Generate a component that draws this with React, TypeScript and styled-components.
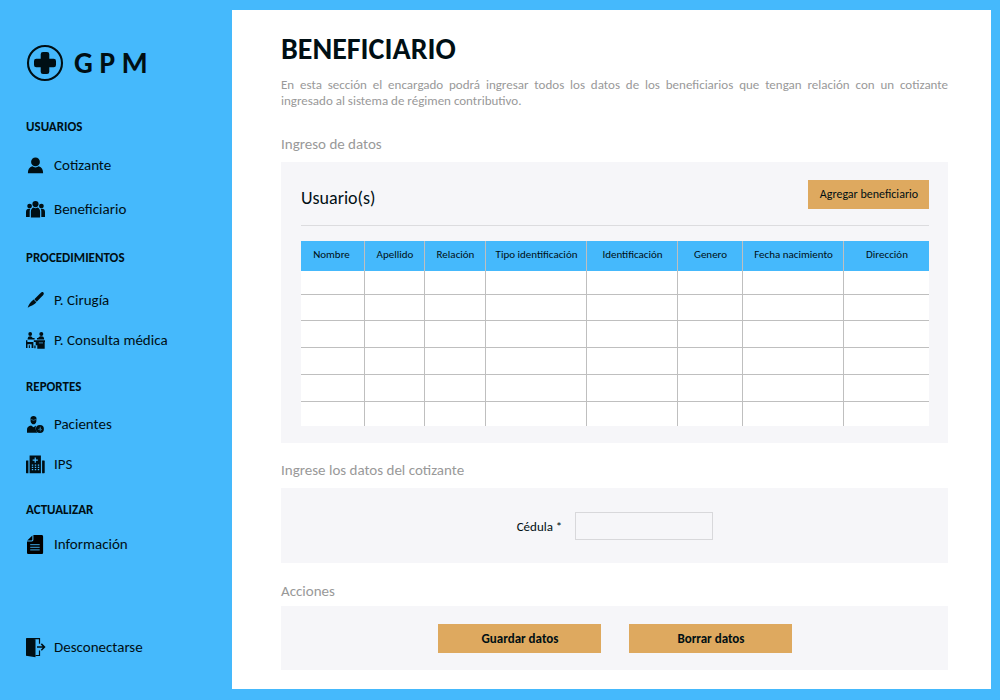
import React from 'react';
import styled, { createGlobalStyle } from 'styled-components';

const BLUE = '#45b9fc';
const INK = '#000f14';
const MUTED = '#999999';
const PANEL = '#f6f6f9';
const ORANGE = '#dea95f';
const GRID = '#bfbfbf';

const GlobalStyle = createGlobalStyle`
  * { box-sizing: border-box; }
  body { margin: 0; }
  body, button, input { font-family: Calibri, Carlito, Lato, sans-serif; color: ${INK}; }
`;

const Page = styled.div`
  display: flex;
  width: 1000px;
  height: 700px;
  padding: 10px 9px 11px 0;
  background: ${BLUE};
  overflow: hidden;
`;

const Sidebar = styled.nav`
  width: 232px;
  flex: none;
  padding: 35px 0 0 26px;
`;

const Brand = styled.div`
  display: flex;
  align-items: center;
  height: 36px;
  margin-bottom: 39px;
`;

const BrandMark = styled.svg`
  width: 38px;
  height: 38px;
  flex: none;
`;

const BrandName = styled.span`
  font-size: 29.5px;
  font-weight: 700;
  line-height: 36px;
  padding: 0 0 1px 10px;
`;

const NavGroup = styled.section<{ $before?: number; $gap: number }>`
  display: flex;
  flex-direction: column;
  gap: ${p => p.$gap}px;
  margin-top: ${p => p.$before ?? 0}px;
`;

const NavHeading = styled.h2<{ $after: number; $gap: number }>`
  margin: 0 0 ${p => p.$after - p.$gap}px;
  padding-bottom: 2px;
  font-size: 13px;
  line-height: 14px;
  font-weight: 700;
`;

const NavItem = styled.a`
  display: flex;
  align-items: flex-start;
  gap: 8px;
  height: 20px;
  font-size: 15px;
  line-height: 18px;
  white-space: nowrap;
`;

const Glyph = styled.svg`
  width: 20px;
  height: 20px;
  flex: none;
  fill: ${INK};
  overflow: visible;
`;

const Main = styled.main`
  width: 759px;
  padding: 24px 43px 0 49px;
  background: #fff;
`;

const Title = styled.h1`
  margin: 0;
  padding-bottom: 5px;
  font-size: 30px;
  line-height: 30px;
  font-weight: 700;
`;

const Intro = styled.p`
  margin: 8px 0 0;
  font-size: 13px;
  line-height: 16px;
  color: ${MUTED};
  text-align: justify;
`;

const Label = styled.h3<{ $before: number; $after: number }>`
  margin: ${p => p.$before}px 0 ${p => p.$after}px;
  font-size: 15px;
  line-height: 20px;
  font-weight: 400;
  color: ${MUTED};
`;

const Panel = styled.section<{ $height: number }>`
  height: ${p => p.$height}px;
  background: ${PANEL};
`;

const UsersPanel = styled(Panel)`
  padding: 18px 19px 0 20px;
`;

const CenteredPanel = styled(Panel)<{ $gap: number }>`
  display: flex;
  align-items: center;
  justify-content: center;
  gap: ${p => p.$gap}px;
`;

const PanelHeader = styled.header`
  display: flex;
  justify-content: space-between;
  height: 46px;
  margin-bottom: 15px;
  border-bottom: 1px solid #dcdcdf;
`;

const PanelTitle = styled.span`
  padding-top: 8px;
  font-size: 18px;
  line-height: 20px;
`;

const Button = styled.button<{ $width: number; $strong?: boolean }>`
  width: ${p => p.$width}px;
  height: 29px;
  padding: 0 0 0 ${p => (p.$strong ? 2 : 1)}px;
  border: 0;
  background: ${ORANGE};
  font-size: ${p => (p.$strong ? 13 : 12)}px;
  font-weight: ${p => (p.$strong ? 700 : 400)};
  line-height: 29px;
`;

const Table = styled.table`
  width: 628px;
  table-layout: fixed;
  border-collapse: separate;
  border-spacing: 0;
  background: #fff;
`;

const HeadCell = styled.th`
  height: 30px;
  padding: 0 0 2px 1px;
  border-right: 1px solid ${GRID};
  background: ${BLUE};
  font-size: 11px;
  line-height: 14px;
  font-weight: 400;
  white-space: nowrap;
  &:first-child { padding: 0 2px 2px 0; }
  &:last-child { border-right: 0; }
`;

const Row = styled.tr<{ $height: number }>`
  height: ${p => p.$height}px;
  &:last-child td { border-bottom: 0; }
`;

const Cell = styled.td`
  padding: 0;
  border-right: 1px solid ${GRID};
  border-bottom: 1px solid ${GRID};
  &:last-child { border-right: 0; }
`;

const FieldLabel = styled.label`
  padding: 2px 0 0 1px;
  font-size: 13px;
  line-height: 16px;
`;

const Field = styled.input`
  width: 138px;
  height: 28px;
  padding: 0 8px;
  border: 1px solid #d8d8db;
  background: transparent;
  outline: 0;
`;

const PersonIcon = () => (
  <Glyph viewBox="0 0 20 20">
    <circle cx="9.5" cy="5.9" r="4.4" />
    <path d="M1.9 17.2c0-3.6 1.2-6 4.4-6.9 1.8 1.5 4.6 1.5 6.4 0 3.2.9 4.4 3.3 4.4 6.9z" />
  </Glyph>
);

const PeopleIcon = () => (
  <Glyph viewBox="0 0 20 20">
    <circle cx="9.5" cy="4.1" r="3.1" />
    <circle cx="3.6" cy="6.1" r="2.4" />
    <circle cx="15.4" cy="6.1" r="2.4" />
    <path d="M4.9 17.6v-6.2c0-2 1.1-3.2 2.6-3.8 1.2.7 2.8.7 4 0 1.5.6 2.6 1.8 2.6 3.8v6.2z" />
    <path d="M0 17v-5c0-1.800.8-3 2.200-3.300.6.300 1.300.400 2 .300-.4.800-.5 1.600-.5 2.500V17z" />
    <path d="M19 17v-5c0-1.800-.8-3-2.200-3.300-.6.300-1.300.400-2 .300.4.800.5 1.600.5 2.500V17z" />
  </Glyph>
);

const ScalpelIcon = () => (
  <Glyph viewBox="0 0 20 20">
    <path d="M8.300 8.200 14.600 2c1-.9 2-1.200 2.800-.5.700.8.500 1.800-.4 2.800l-6.300 6.500z" />
    <path d="M7.700 8.600 10.300 11.200c-1 1.500-2.400 2.400-4.200 3.200l-1.900.8-2.500 1.500c.8-3 3-5.900 6-8.100z" />
  </Glyph>
);

const ConsultIcon = () => (
  <Glyph viewBox="0 0 20 20">
    <circle cx="4.200" cy="3" r="1.900" />
    <circle cx="15.300" cy="3" r="2" />
    <path d="M1.600 8.600c0-2.200.8-3.400 2.600-3.400 1.300 0 1.900.7 2.400 1.900h2v1.500z" />
    <path d="M11 7.100h1.200c.6-1.300 1.500-1.900 3.100-1.900 2 0 2.900 1.200 2.900 3.400H11z" />
    <path d="M0 9.200h1.400v1.700h6V17H5.600v-3.700H1.500V17H0z" />
    <path d="M2.800 14.200h1.100V17H2.800z" />
    <path d="M7.800 9.200H19v1.700h-.3v6.900h-7.400v-3.600H9.700v-3.300H7.800z" />
    <path d="M8.300 14.400h1.300v2.800H8.300z" />
    <path d="M12.800 11.900h4.200" stroke={BLUE} strokeWidth=".7" />
  </Glyph>
);

const PatientIcon = () => (
  <Glyph viewBox="0 0 20 20">
    <path d="M4.500 3.500C4.500 1.700 5.700.900 7.500.900s3 .8 3 2.600l-.2 2.900c-.3 1.700-1.400 2.900-2.800 2.900S5 8.100 4.700 6.400z" />
    <path d="M5.100 4.500 7.500 5.300l2.400-.8" fill="none" stroke={BLUE} strokeWidth=".5" />
    <path d="M1 17.700v-2.900c0-2.500 1.300-3.600 4.100-4.200L7.500 12.300l2.600-1.700c-1 2.500-.4 5.200 1.300 7.100z" />
    <circle cx="13.900" cy="14" r="4" />
    <path d="M14.300 11.700v4.600M12.300 14.500l2-.7 1.600 1" fill="none" stroke={BLUE} strokeWidth=".7" opacity=".75" />
  </Glyph>
);

const HospitalIcon = () => (
  <Glyph viewBox="0 0 20 20">
    <path d="M3.600.400h11.300v17.900H3.600zM.400 5.600h2v12.700h-2c-.3 0-.4-.2-.4-.5V6.100c0-.3.100-.5.400-.5zM16.100 5.600h2c.4 0 .6.200.6.500v11.700c0 .300-.2.500-.6.500h-2z" />
    <path d="M9.250 2.500v5.200M6.650 5.100h5.200" stroke={BLUE} strokeWidth="1.200" />
    <path d="M5.800 10.100h7.400M5.800 12.400h7.400M5.800 14.700h7.400" stroke={BLUE} strokeWidth="1.200" strokeDasharray="1.400 1.600" />
  </Glyph>
);

const DocumentIcon = () => (
  <Glyph viewBox="0 0 20 20" >
    <path fill="#000" d="M7.400 0h8.100c1.100 0 1.600.6 1.600 1.600v15.800c0 1-.5 1.600-1.600 1.600H2.600c-1 0-1.600-.6-1.600-1.600V6.400h4.600c1.300 0 1.800-.5 1.800-1.800z" />
    <path fill="#000" d="M6.400.4v4.200c0 .6-.3.900-.9.900H1.200z" />
    <path d="M4.200 9.700h9.500M4.200 12.300h9.500M4.200 14.900h9.500" stroke={BLUE} strokeWidth=".9" />
  </Glyph>
);

const ExitIcon = () => (
  <Glyph viewBox="0 0 20 20">
    <path d="M0 .200 9.500 1.300v17.900L0 17.800z" />
    <path d="M.5.700h13v5M13.500 12.600v4.900H9.500" fill="none" stroke={INK} strokeWidth="1.200" />
    <path d="M11 9.100h7M15.300 5.900l3.200 3.200-3.200 3.200" fill="none" stroke={INK} strokeWidth="1.500" />
  </Glyph>
);

const columns: [string, number][] = [
  ['Nombre', 64],
  ['Apellido', 60],
  ['Relación', 61],
  ['Tipo identificación', 101],
  ['Identificación', 91],
  ['Genero', 65],
  ['Fecha nacimiento', 101],
  ['Dirección', 85],
];

const rowHeights = [24, 26, 27, 27, 27, 24];

export default function App() {
  return (
    <Page>
      <GlobalStyle />
      <Sidebar>
        <Brand>
          <BrandMark viewBox="0 0 38 38">
            <circle cx="19" cy="19" r="17" fill="none" stroke={INK} strokeWidth="2.100" />
            <path
              fill={INK}
              d="M17 8h4a2.300 2.300 0 0 1 2.300 2.300v4.400h4.400A2.300 2.300 0 0 1 30 17v4a2.300 2.300 0 0 1-2.300 2.300h-4.400v4.400A2.300 2.300 0 0 1 21 30h-4a2.300 2.300 0 0 1-2.300-2.300v-4.400h-4.400A2.300 2.300 0 0 1 8 21v-4a2.300 2.300 0 0 1 2.300-2.300h4.400v-4.400A2.300 2.300 0 0 1 17 8z"
            />
          </BrandMark>
          <BrandName>G P M</BrandName>
        </Brand>

        <NavGroup $gap={24}>
          <NavHeading $after={20} $gap={24}>USUARIOS</NavHeading>
          <NavItem><PersonIcon />Cotizante</NavItem>
          <NavItem><PeopleIcon />Beneficiario</NavItem>
        </NavGroup>
        <NavGroup $before={31} $gap={20}>
          <NavHeading $after={24} $gap={20}>PROCEDIMIENTOS</NavHeading>
          <NavItem><ScalpelIcon />P. Cirugía</NavItem>
          <NavItem><ConsultIcon />P. Consulta médica</NavItem>
        </NavGroup>
        <NavGroup $before={29} $gap={20}>
          <NavHeading $after={19} $gap={20}>REPORTES</NavHeading>
          <NavItem><PatientIcon />Pacientes</NavItem>
          <NavItem><HospitalIcon />IPS</NavItem>
        </NavGroup>
        <NavGroup $before={28} $gap={16}>
          <NavHeading $after={16} $gap={16}>ACTUALIZAR</NavHeading>
          <NavItem><DocumentIcon />Información</NavItem>
        </NavGroup>
        <NavGroup $before={83} $gap={0}>
          <NavItem><ExitIcon />Desconectarse</NavItem>
        </NavGroup>
      </Sidebar>

      <Main>
        <Title>BENEFICIARIO</Title>
        <Intro>
          En esta sección el encargado podrá ingresar todos los datos de los beneficiarios que tengan
          relación con un cotizante ingresado al sistema de régimen contributivo.
        </Intro>

        <Label $before={25} $after={8}>Ingreso de datos</Label>
        <UsersPanel $height={281}>
          <PanelHeader>
            <PanelTitle>Usuario(s)</PanelTitle>
            <Button $width={121}>Agregar beneficiario</Button>
          </PanelHeader>
          <Table>
            <colgroup>
              {columns.map(([name, width]) => <col key={name} width={width} />)}
            </colgroup>
            <thead>
              <tr>{columns.map(([name]) => <HeadCell key={name}>{name}</HeadCell>)}</tr>
            </thead>
            <tbody>
              {rowHeights.map((height, i) => (
                <Row key={i} $height={height}>
                  {columns.map(([name]) => <Cell key={name} />)}
                </Row>
              ))}
            </tbody>
          </Table>
        </UsersPanel>

        <Label $before={17} $after={8}>Ingrese los datos del cotizante</Label>
        <CenteredPanel $height={75} $gap={13}>
          <FieldLabel htmlFor="cedula">Cédula *</FieldLabel>
          <Field id="cedula" />
        </CenteredPanel>

        <Label $before={18} $after={5}>Acciones</Label>
        <CenteredPanel $height={64} $gap={28}>
          <Button $width={163} $strong>Guardar datos</Button>
          <Button $width={163} $strong>Borrar datos</Button>
        </CenteredPanel>
      </Main>
    </Page>
  );
}
